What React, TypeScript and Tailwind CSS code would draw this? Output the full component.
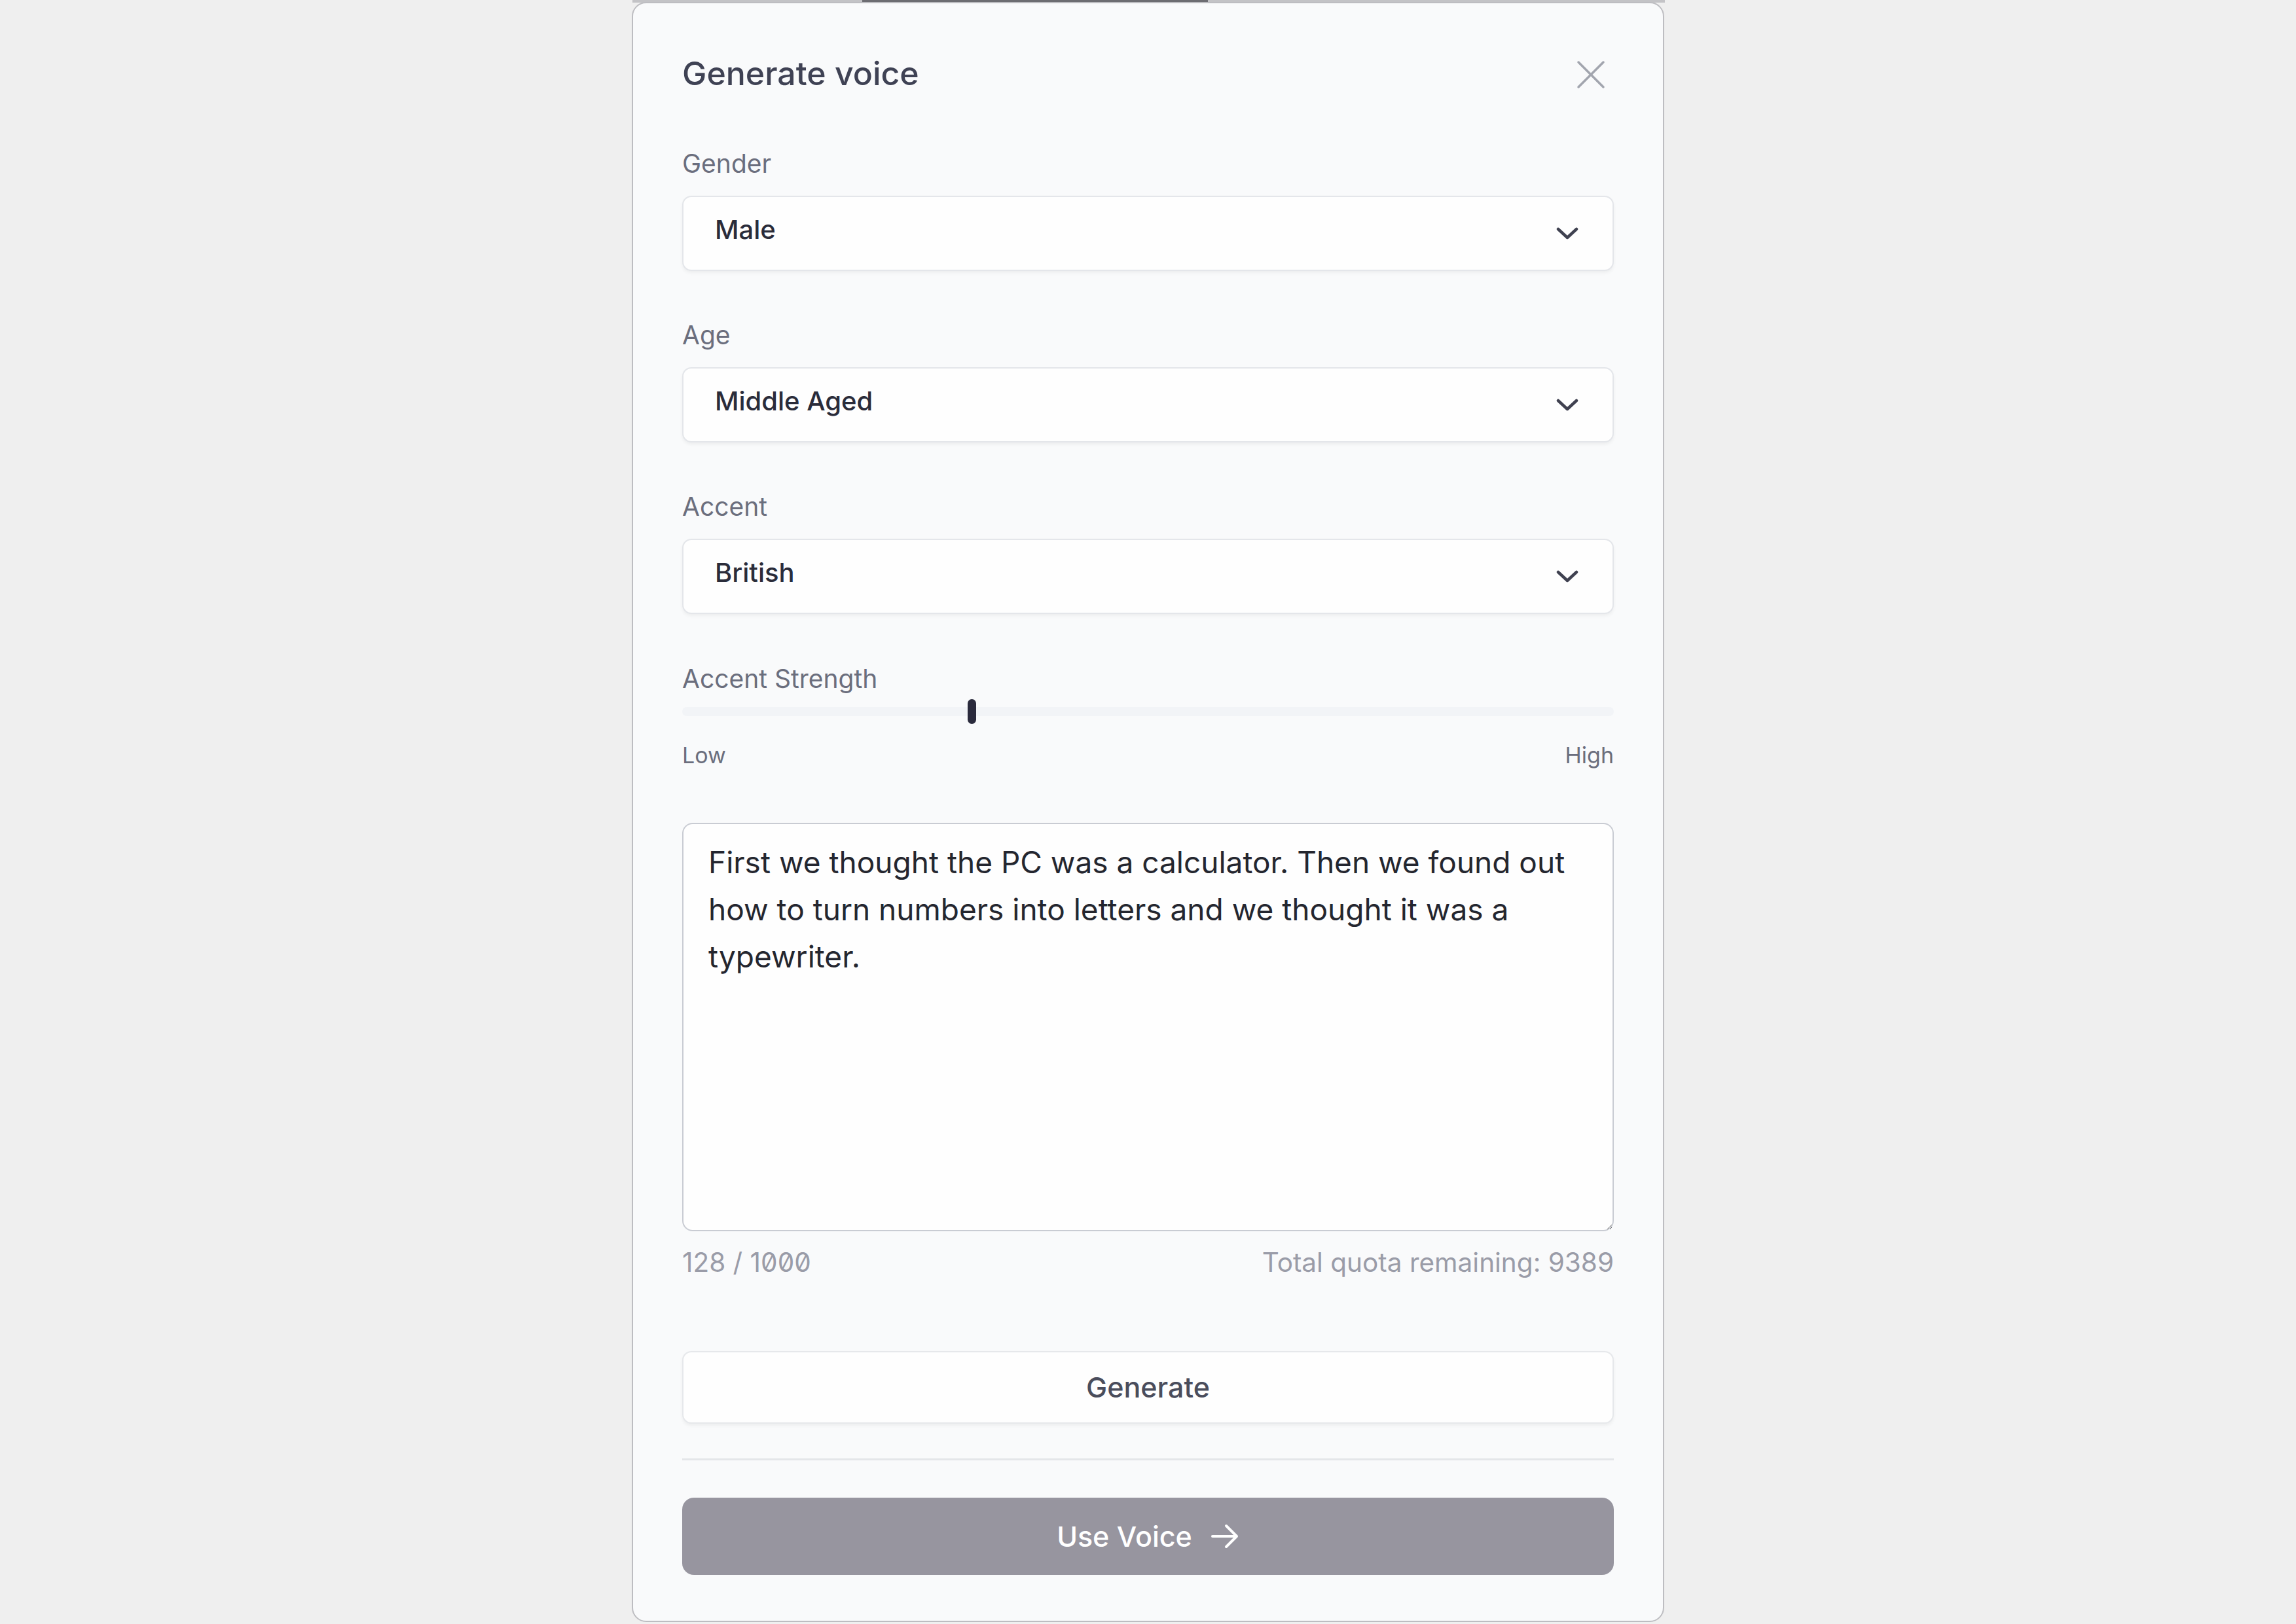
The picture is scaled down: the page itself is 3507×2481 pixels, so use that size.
import React from "react";

function Chevron() {
  return (
    <svg width="34" height="20" viewBox="0 0 34 20" fill="none">
      <path d="M3 3 L17 16 L31 3" stroke="#3f4150" strokeWidth="4.5" strokeLinecap="round" strokeLinejoin="round" />
    </svg>
  );
}

function SelectField({ label, value }: { label: string; value: string }) {
  return (
    <div className="flex flex-col">
      <div className="h-[46px] leading-[46px] text-[39px] text-[#6b6e7d]">{label}</div>
      <div className="mt-[26px] h-[115px] flex items-center justify-between rounded-[14px] border-2 border-[#e4e6ea] bg-[#fefefe] shadow-[0_3px_5px_rgba(0,0,0,0.05)] pl-[48px] pr-[52px]">
        <span className="pb-[12px] text-[40px] font-medium text-[#2a2c3a]">{value}</span>
        <Chevron />
      </div>
    </div>
  );
}

export default function App() {
  return (
    <div className="relative w-[3507px] h-[2481px] bg-[#efefef] overflow-hidden" style={{ fontFamily: "Inter, 'Noto Sans', sans-serif" }}>
      <div className="absolute left-[966px] top-0 w-[1577px] h-[4px] bg-[#c3c3c6]">
        <div className="ml-[351px] w-[528px] h-[4px] bg-[#6d6d72]" />
      </div>
      <div className="relative mx-auto mt-[3px] w-[1577px] h-[2475px] rounded-[22px] bg-[#f9fafb] border-2 border-[#bdbdc1] px-[75px] pt-[77px] pb-[70px] flex flex-col">
        <div className="flex items-center justify-between h-[60px]">
          <h1 className="text-[50px] font-medium leading-[60px] text-[#3f4254]">Generate voice</h1>
          <svg width="46" height="46" viewBox="0 0 46 46" className="mr-[12px] mt-[4px]">
            <path d="M4 4 L42 42 M42 4 L4 42" stroke="#a2a5ae" strokeWidth="3.5" strokeLinecap="round" />
          </svg>
        </div>

        <div className="mt-[85px] flex flex-col gap-[75px]">
          <SelectField label="Gender" value="Male" />
          <SelectField label="Age" value="Middle Aged" />
          <SelectField label="Accent" value="British" />
        </div>

        <div className="mt-[76px] h-[46px] leading-[46px] text-[39px] text-[#6b6e7d]">Accent Strength</div>
        <div className="relative mt-[8px] h-[38px] flex items-center">
          <div className="w-full h-[14px] rounded-full bg-[#f2f4f7]" />
          <div className="absolute left-[436px] top-0 w-[13px] h-[38px] rounded-full bg-[#2a2a3c]" />
        </div>
        <div className="mt-[28px] flex justify-between h-[40px] leading-[40px] text-[34px] text-[#6b6e7d]">
          <span>Low</span>
          <span>High</span>
        </div>

        <textarea
          className="mt-[83px] h-[625px] w-full rounded-[16px] border-2 border-[#c9ccd3] bg-[#fefefe] pl-[38px] pr-[30px] pt-[22px] text-[46px] leading-[72px] text-[#24262f] outline-none"
          defaultValue="First we thought the PC was a calculator. Then we found out how to turn numbers into letters and we thought it was a typewriter."
        />

        <div className="mt-[25px] flex justify-between h-[46px] leading-[46px] text-[40.5px] text-[#9a9ca8]">
          <span>
            128 / <span className="[font-feature-settings:'zero']">1000</span>
          </span>
          <span>Total quota remaining: 9389</span>
        </div>

        <button className="mt-[112px] h-[112px] w-full rounded-[14px] border-2 border-[#e6e8eb] bg-[#fefefe] shadow-[0_3px_5px_rgba(0,0,0,0.05)] text-[43px] font-medium text-[#4a4d5c]">
          Generate
        </button>

        <div className="mt-[53px] h-[3px] w-full bg-[#e4e6e9]" />

        <button className="mt-[57px] h-[118px] w-full rounded-[18px] bg-[#97959f] flex items-center justify-center gap-[28px] text-[43px] font-medium text-white">
          <span>Use Voice</span>
          <svg width="44" height="40" viewBox="0 0 44 40" fill="none">
            <path d="M3 20 H40 M24 4 L40 20 L24 36" stroke="#ffffff" strokeWidth="4" strokeLinecap="round" strokeLinejoin="round" />
          </svg>
        </button>
      </div>
    </div>
  );
}
